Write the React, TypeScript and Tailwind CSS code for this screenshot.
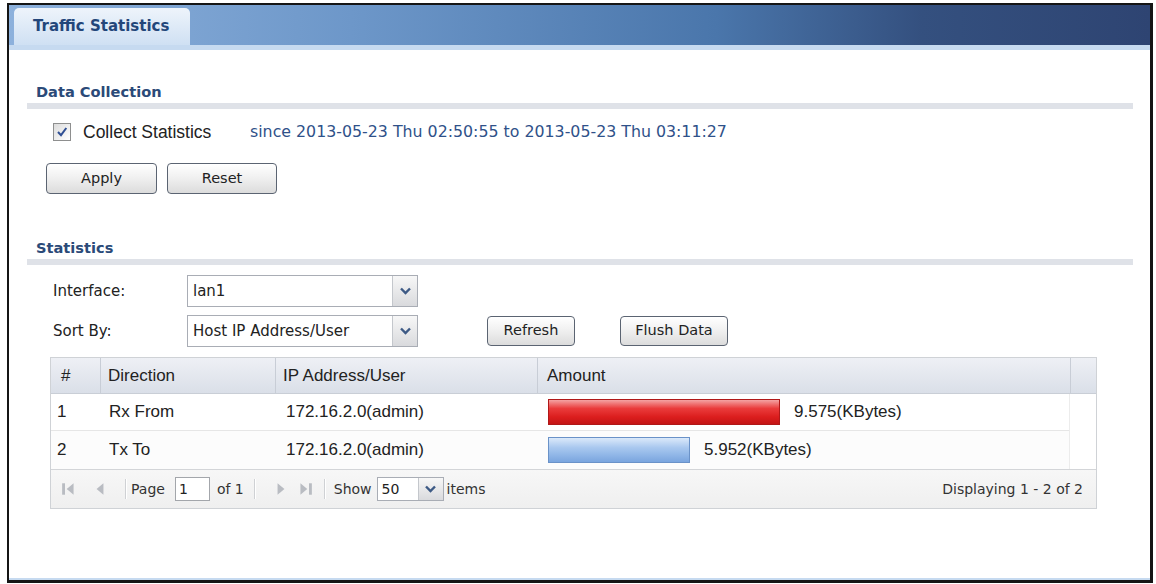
import React from "react";

const tah = "font-['DejaVu_Sans',sans-serif]";
const ari = "font-['Liberation_Sans',Arial,sans-serif]";

function Chevron() {
  return (
    <svg width="11" height="8" viewBox="0 0 11 8">
      <path d="M1 1.5 L5.5 6 L10 1.5" fill="none" stroke="#3d5a85" strokeWidth="2.4" />
    </svg>
  );
}

function Select({ value, w, h, textCls }: { value: string; w: string; h: string; textCls: string }) {
  return (
    <div className={`flex ${w} ${h} border border-[#a9adb5] bg-white`}>
      <div className={`flex flex-1 items-center pl-[5px] text-[#222] ${textCls}`}>{value}</div>
      <div className="flex w-[25px] items-center justify-center border-l border-[#c4c7cc] bg-[linear-gradient(180deg,#f7f7f7,#d9dadd)]">
        <Chevron />
      </div>
    </div>
  );
}

function Btn({ label, w }: { label: string; w: string }) {
  return (
    <div
      className={`flex ${w} h-full items-center justify-center rounded-[4px] border border-[#5b6472] bg-[linear-gradient(180deg,#ffffff_0%,#f1f1f1_45%,#dcdcdc_100%)] shadow-[inset_0_1px_0_#fff] ${tah} text-[14.5px] text-[#222]`}
    >
      {label}
    </div>
  );
}

function SectionHeader({ title }: { title: string }) {
  return (
    <div>
      <div className={`ml-[27px] h-[20px] leading-[20px] ${tah} text-[14.6px] font-bold text-[#2b4a78]`}>{title}</div>
      <div className="ml-[18px] mt-[1px] h-[6px] w-[1106px] bg-[#dfe2e8]" />
    </div>
  );
}

function Tri({ dir, bar }: { dir: "l" | "r"; bar?: boolean }) {
  return (
    <svg width="16" height="16" viewBox="0 0 14 14">
      {dir === "l" ? (
        <>
          {bar && <rect x="1" y="2" width="2.5" height="10" fill="#b9bcc2" />}
          <path d={bar ? "M11 2 L11 12 L5 7 Z" : "M10 2 L10 12 L4 7 Z"} fill="#b9bcc2" />
        </>
      ) : (
        <>
          <path d={bar ? "M3 2 L3 12 L9 7 Z" : "M4 2 L4 12 L10 7 Z"} fill="#b9bcc2" />
          {bar && <rect x="10.5" y="2" width="2.5" height="10" fill="#b9bcc2" />}
        </>
      )}
    </svg>
  );
}

function Sep() {
  return <div className="h-[20px] w-[2px] border-l border-[#cfd1d4] bg-white" />;
}

export default function App() {
  return (
    <div className="h-[584px] w-[1156px] overflow-hidden bg-white pl-[7px] pt-[3px]">
      <div className="flex h-[580px] w-[1146px] flex-col border-2 border-r-[3px] border-b-[3px] border-[#151515] bg-white">
        {/* tab bar */}
        <div className="flex h-[40px] items-end bg-[linear-gradient(90deg,#8db1dc_0%,#6d97c9_30%,#4a76ab_62%,#34507f_80%,#2e4472_100%)]">
          <div className="ml-[5px] flex h-[37px] w-[176px] items-center rounded-t-[5px] bg-[linear-gradient(180deg,#eef4fb,#cfe0f3)] pl-[19px]">
            <span className={`${tah} text-[15px] font-bold text-[#23467a]`}>Traffic Statistics</span>
          </div>
        </div>
        <div className="h-[5px] bg-[#c6daf0]" />

        <div className="mt-[32px]">
          <SectionHeader title="Data Collection" />
        </div>

        <div className="mt-[13px] flex h-[20px] items-center pl-[44px]">
          <div className="flex h-[18px] w-[18px] items-center justify-center border border-[#8e8f8f] bg-[linear-gradient(135deg,#dcdcdc,#ffffff)]">
            <svg width="12" height="12" viewBox="0 0 12 12">
              <path d="M2 6 L5 9.2 L10.3 2" fill="none" stroke="#2f4f94" strokeWidth="2" />
            </svg>
          </div>
          <span className={`ml-[12px] w-[167px] ${ari} text-[17.5px] text-[#222]`}>Collect Statistics</span>
          <span className={`${tah} text-[15.8px] text-[#2f5189]`}>
            since 2013-05-23 Thu 02:50:55 to 2013-05-23 Thu 03:11:27
          </span>
        </div>

        <div className="mt-[21px] flex h-[31px] gap-[10px] pl-[37px]">
          <Btn label="Apply" w="w-[111px]" />
          <Btn label="Reset" w="w-[110px]" />
        </div>

        <div className="mt-[44px]">
          <SectionHeader title="Statistics" />
        </div>

        <div className="mt-[10px] flex h-[32px] items-center pl-[44px]">
          <span className={`w-[134px] ${tah} text-[15px] text-[#222]`}>Interface:</span>
          <Select value="lan1" w="w-[231px]" h="h-[32px]" textCls={`${tah} text-[15px]`} />
        </div>
        <div className="mt-[8px] flex h-[32px] items-center pl-[44px]">
          <span className={`w-[134px] ${tah} text-[15px] text-[#222]`}>Sort By:</span>
          <Select value="Host IP Address/User" w="w-[231px]" h="h-[32px]" textCls={`${tah} text-[15px]`} />
          <div className="ml-[69px] h-[30px]">
            <Btn label="Refresh" w="w-[88px]" />
          </div>
          <div className="ml-[45px] h-[30px]">
            <Btn label="Flush Data" w="w-[108px]" />
          </div>
        </div>

        {/* table */}
        <div className="ml-[41px] mt-[10px] w-[1047px] border border-[#cfd2d6]">
          <div className={`flex h-[36px] items-center border-b border-[#c9ced6] bg-[linear-gradient(180deg,#eef0f5,#dadfe8)] ${ari} text-[17px] text-[#222]`}>
            <div className="flex h-full w-[50px] items-center border-r border-[#c8cdd6] pl-[10px]">#</div>
            <div className="flex h-full w-[175px] items-center border-r border-[#c8cdd6] pl-[7px]">Direction</div>
            <div className="flex h-full w-[262px] items-center border-r border-[#c8cdd6] pl-[7px]">IP Address/User</div>
            <div className="flex h-full w-[533px] items-center border-r border-[#c8cdd6] pl-[9px]">Amount</div>
            <div className="h-full flex-1" />
          </div>
          <div className="flex">
            <div className={`w-[1019px] border-r border-[#ececec] ${ari} text-[17px] text-[#222]`}>
              <div className="flex h-[37px] items-center border-b border-[#e6e6e6] bg-white">
                <div className="w-[50px] pl-[6px]">1</div>
                <div className="w-[175px] pl-[8px]">Rx From</div>
                <div className="w-[262px] pl-[10px]">172.16.2.0(admin)</div>
                <div className="flex items-center pl-[10px]">
                  <div className="h-[26px] w-[232px] border border-[#b01818] bg-[linear-gradient(180deg,#f4a3a3_0%,#ea3c3c_35%,#dc1e1e_70%,#c41515_100%)]" />
                  <span className="ml-[14px]">9.575(KBytes)</span>
                </div>
              </div>
              <div className="flex h-[38px] items-center bg-[#fcfcfc]">
                <div className="w-[50px] pl-[6px]">2</div>
                <div className="w-[175px] pl-[8px]">Tx To</div>
                <div className="w-[262px] pl-[10px]">172.16.2.0(admin)</div>
                <div className="flex items-center pl-[10px]">
                  <div className="h-[26px] w-[142px] border border-[#6a92c8] bg-[linear-gradient(180deg,#dbe9fa_0%,#a9c8ef_40%,#8db4e6_75%,#7aa5de_100%)]" />
                  <span className="ml-[14px]">5.952(KBytes)</span>
                </div>
              </div>
            </div>
            <div className="flex-1 bg-white" />
          </div>
          <div className={`flex h-[39px] items-center border-t border-[#d3d5d8] bg-[linear-gradient(180deg,#f7f7f7,#efefef)] ${tah} text-[14px] text-[#333]`}>
            <div className="ml-[10px]"><Tri dir="l" bar /></div>
            <div className="ml-[15px]"><Tri dir="l" /></div>
            <div className="ml-[17px]"><Sep /></div>
            <span className="ml-[4px]">Page</span>
            <div className="ml-[10px] flex h-[24px] w-[35px] items-center border border-[#a3a6ab] bg-white pl-[3px] text-[#222]">1</div>
            <span className="ml-[7px]">of 1</span>
            <div className="ml-[10px]"><Sep /></div>
            <div className="ml-[17px]"><Tri dir="r" /></div>
            <div className="ml-[8px]"><Tri dir="r" bar /></div>
            <div className="ml-[11px]"><Sep /></div>
            <span className="ml-[8px]">Show</span>
            <div className="ml-[5px] flex h-[24px] w-[67px] border border-[#a9adb5] bg-white">
              <div className="flex flex-1 items-center pl-[4px] text-[#222]">50</div>
              <div className="flex w-[25px] items-center justify-center border-l border-[#c4c7cc] bg-[linear-gradient(180deg,#f7f7f7,#d9dadd)]">
                <Chevron />
              </div>
            </div>
            <span className="ml-[3px]">items</span>
            <span className="ml-auto mr-[13px]">Displaying 1 - 2 of 2</span>
          </div>
        </div>

        <div className="flex-1" />
        <div className="h-[2px] bg-[#c6daf0]" />
      </div>
    </div>
  );
}
